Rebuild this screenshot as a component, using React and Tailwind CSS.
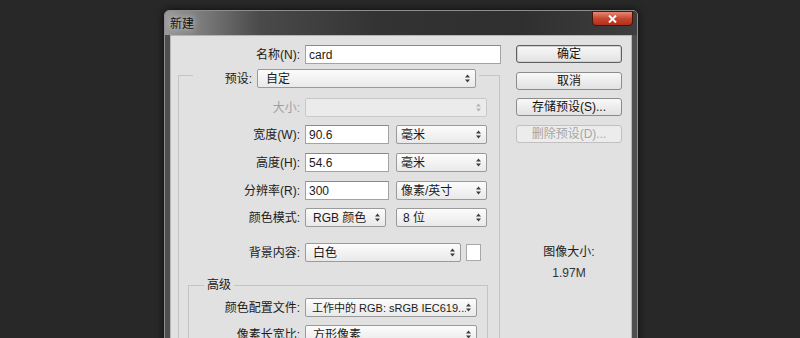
import React from "react";

const Arrows = ({ disabled }) => (
  <svg width="5" height="9" viewBox="0 0 5 9" className="shrink-0">
    <path d="M0 3.5 L2.5 0.5 L5 3.5Z M0 5.5 L2.5 8.5 L5 5.5Z" fill={disabled ? "#b4b4b4" : "#3c3c3c"} />
  </svg>
);

const Select = ({ className, text, disabled, textClass }) => (
  <div
    className={
      "h-[19px] flex items-center justify-between pr-[5px] rounded-[2px] border " +
      (disabled
        ? "border-[#c8c8c8] bg-[#ebebeb] "
        : "border-[#9a9a9a] bg-[linear-gradient(#fcfcfc,#e9e9e9)] ") +
      className
    }
  >
    <span className={"whitespace-nowrap overflow-hidden min-w-0 " + (textClass || "")}>{text}</span>
    <Arrows disabled={disabled} />
  </div>
);

const Input = ({ className, text }) => (
  <div
    className={
      "h-[19px] flex items-center pl-[3px] bg-white border border-[#a3a3a3] border-t-[#8a8a8a] " +
      className
    }
  >
    {text}
  </div>
);

const Button = ({ text, disabled, primary }) => (
  <div
    className={
      "h-[18px] w-full flex items-center justify-center rounded-[3px] border whitespace-nowrap " +
      (disabled
        ? "border-[#c0c0c0] bg-[#ececec] text-[#a6a6a6]"
        : primary
        ? "border-[#5f5f5f] bg-[linear-gradient(#f8f8f8,#e2e2e2)] shadow-[inset_0_0_0_1px_#d0d0d0] text-[#111]"
        : "border-[#8c8c8c] bg-[linear-gradient(#f8f8f8,#e2e2e2)] text-[#111]")
    }
  >
    {text}
  </div>
);

export default function App() {
  return (
    <div className="w-[800px] h-[338px] overflow-hidden bg-[#282828] text-[12px] leading-[16px] text-[#1b1b1b] font-['Liberation_Sans','Noto_Sans_CJK_SC',sans-serif]">
      <div className="ml-[164px] mt-[10px] w-[474px] h-[340px] border border-[#8e8e8e] rounded-t-[5px] bg-[#4e4e4e] shadow-[0_0_8px_rgba(0,0,0,0.7)] flex flex-col">
        {/* title bar */}
        <div className="h-[24px] shrink-0 flex items-start justify-between rounded-t-[4px] bg-[linear-gradient(to_right,#9a9a9a_0%,#7a7a7a_8%,#4a4a4a_20%,#333333_45%,#2f2f2f_75%,#3e3e3e_100%)]">
          <span className="ml-[5px] mt-[5px] text-[#111] [text-shadow:0_0_6px_rgba(255,255,255,0.8)]">新建</span>
          <div className="mr-[4px] w-[41px] h-[15px] rounded-b-[4px] border border-[#4a1208] bg-[linear-gradient(#e58a73,#c84630_50%,#b0301d)] flex items-center justify-center">
            <svg width="9" height="8" viewBox="0 0 9 8">
              <path d="M1 0.5 L8 7.5 M8 0.5 L1 7.5" stroke="#fff" strokeWidth="2" />
            </svg>
          </div>
        </div>
        {/* body */}
        <div className="flex flex-1 px-[5px]">
          <div className="flex-1 bg-[#e1e1e1] border border-[#b5b5b5] flex pl-[7px] pt-[9px]">
            {/* left column */}
            <div className="w-[323px] flex flex-col">
              <div className="flex items-center h-[19px]">
                <div className="w-[127px] pr-[5px] text-right">名称(N):</div>
                <Input className="w-[196px]" text="card" />
              </div>
              <fieldset className="-mt-px w-[322px] h-[300px] border border-[#c4c4c4] m-0 p-0 min-w-0">
                <legend className="ml-[14px] pt-[6px] pr-[3px] p-0">
                  <div className="flex items-center">
                    <div className="w-[61px] pr-[2px] text-right">预设:</div>
                    <Select className="ml-[3px] w-[219px]" text="自定" textClass="pl-[8px]" />
                  </div>
                </legend>
                <div className="pt-[10px] flex flex-col">
                  <div className="flex items-center">
                    <div className="w-[126px] pr-[5px] text-right text-[#a0a0a0]">大小:</div>
                    <Select className="w-[182px]" text="" disabled />
                  </div>
                  <div className="mt-[8px] flex items-center">
                    <div className="w-[126px] pr-[5px] text-right">宽度(W):</div>
                    <Input className="w-[84px]" text="90.6" />
                    <Select className="ml-[7px] w-[91px]" text="毫米" textClass="pl-[4px]" />
                  </div>
                  <div className="mt-[9px] flex items-center">
                    <div className="w-[126px] pr-[5px] text-right">高度(H):</div>
                    <Input className="w-[84px]" text="54.6" />
                    <Select className="ml-[7px] w-[91px]" text="毫米" textClass="pl-[4px]" />
                  </div>
                  <div className="mt-[9px] flex items-center">
                    <div className="w-[126px] pr-[5px] text-right">分辨率(R):</div>
                    <Input className="w-[84px]" text="300" />
                    <Select className="ml-[7px] w-[91px]" text="像素/英寸" textClass="pl-[4px]" />
                  </div>
                  <div className="mt-[8px] flex items-center">
                    <div className="w-[126px] pr-[5px] text-right">颜色模式:</div>
                    <Select className="w-[81px]" text="RGB 颜色" textClass="pl-[7px]" />
                    <Select className="ml-[10px] w-[91px]" text="8 位" textClass="pl-[6px]" />
                  </div>
                  <div className="mt-[16px] flex items-center">
                    <div className="w-[126px] pr-[5px] text-right">背景内容:</div>
                    <Select className="w-[156px]" text="白色" textClass="pl-[7px]" />
                    <div className="ml-[5px] w-[15px] h-[17px] bg-white border border-[#a8a8a8]" />
                  </div>
                  <fieldset className="mt-[15px] ml-[9px] w-[300px] h-[80px] border border-[#c4c4c4] m-0 p-0 min-w-0">
                    <legend className="ml-[15px] px-[3px]">高级</legend>
                    <div className="pt-[5px] flex flex-col">
                      <div className="flex items-center">
                        <div className="w-[116px] pr-[5px] text-right">颜色配置文件:</div>
                        <Select className="w-[172px]" text="工作中的 RGB: sRGB IEC619..." textClass="pl-[6px] text-[11px]" />
                      </div>
                      <div className="mt-[8px] flex items-center">
                        <div className="w-[116px] pr-[5px] text-right">像素长宽比:</div>
                        <Select className="w-[172px]" text="方形像素" textClass="pl-[7px]" />
                      </div>
                    </div>
                  </fieldset>
                </div>
              </fieldset>
            </div>
            {/* right column */}
            <div className="ml-[15px] w-[106px] flex flex-col items-center">
              <Button text="确定" primary />
              <div className="mt-[9px] w-full"><Button text="取消" /></div>
              <div className="mt-[8px] w-full"><Button text="存储预设(S)..." /></div>
              <div className="mt-[9px] w-full"><Button text="删除预设(D)..." disabled /></div>
              <div className="mt-[101px] text-center">图像大小:</div>
              <div className="mt-[5px] text-center text-[#333]">1.97M</div>
            </div>
          </div>
        </div>
      </div>
    </div>
  );
}
